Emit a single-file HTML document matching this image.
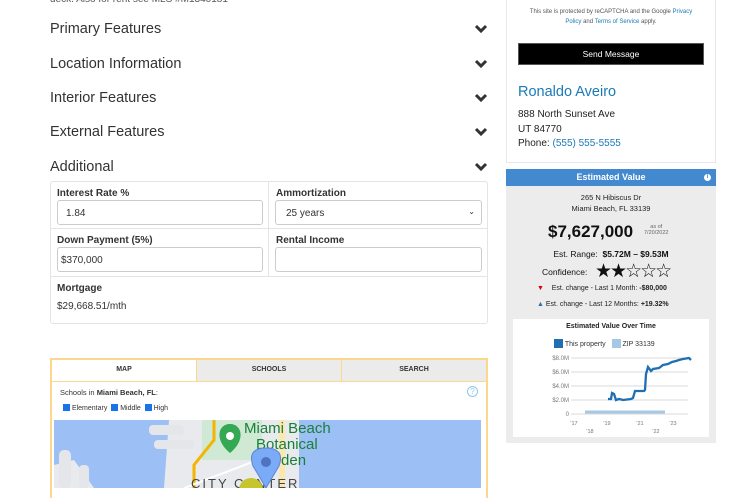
<!DOCTYPE html>
<html><head><meta charset="utf-8"><style>
*{box-sizing:border-box;margin:0;padding:0}
body{width:735px;height:488px;overflow:hidden;background:#fff;font-family:"Liberation Sans",sans-serif;color:#333;position:relative}
.a{position:absolute}
.h{position:absolute;left:50px;font-size:14.5px;color:#333}
.chev{position:absolute;left:474px;width:14px;height:10px}
.lab{position:absolute;font-size:10px;font-weight:bold;color:#333}
.inp{position:absolute;border:1px solid #ccc;border-radius:3px;height:25px;font-size:10px;padding:7px 0 0 8px;background:#fff}
</style></head><body>
<div class="a" style="left:50px;top:-6px;font-size:10px;color:#555">deck. Also for rent see MLS #M1340181</div>
<div class="h" style="top:21px">Primary Features</div>
<div class="h" style="top:56px">Location Information</div>
<div class="h" style="top:90px">Interior Features</div>
<div class="h" style="top:124px">External Features</div>
<div class="h" style="top:159px">Additional</div>
<svg class="chev" style="top:24px" viewBox="0 0 14 10"><path d="M2 2l5 5 5-5" stroke="#333" stroke-width="3" fill="none"/></svg>
<svg class="chev" style="top:59px" viewBox="0 0 14 10"><path d="M2 2l5 5 5-5" stroke="#333" stroke-width="3" fill="none"/></svg>
<svg class="chev" style="top:93px" viewBox="0 0 14 10"><path d="M2 2l5 5 5-5" stroke="#333" stroke-width="3" fill="none"/></svg>
<svg class="chev" style="top:127px" viewBox="0 0 14 10"><path d="M2 2l5 5 5-5" stroke="#333" stroke-width="3" fill="none"/></svg>
<svg class="chev" style="top:162px" viewBox="0 0 14 10"><path d="M2 2l5 5 5-5" stroke="#333" stroke-width="3" fill="none"/></svg>

<div class="a" style="left:50px;top:181px;width:438px;height:143px;border:1px solid #e4e4e4;border-radius:3px"></div>
<div class="a" style="left:268px;top:181px;width:1px;height:95px;background:#e4e4e4"></div>
<div class="a" style="left:50px;top:228px;width:438px;height:1px;background:#e4e4e4"></div>
<div class="a" style="left:50px;top:276px;width:438px;height:1px;background:#e4e4e4"></div>
<div class="lab" style="left:57px;top:188px">Interest Rate %</div>
<div class="lab" style="left:276px;top:188px">Ammortization</div>
<div class="inp" style="left:57px;top:200px;width:206px">1.84</div>
<div class="inp" style="left:275px;top:200px;width:207px;padding-left:10px">25 years<span style="position:absolute;right:6px;top:6px;font-size:8px">&#8964;</span></div>
<div class="lab" style="left:57px;top:235px">Down Payment (5%)</div>
<div class="lab" style="left:276px;top:235px">Rental Income</div>
<div class="inp" style="left:57px;top:247px;width:206px;padding-left:3px">$370,000</div>
<div class="inp" style="left:275px;top:247px;width:207px"></div>
<div class="lab" style="left:57px;top:283px">Mortgage</div>
<div class="a" style="left:57px;top:301px;font-size:10px">$29,668.51/mth</div>

<div class="a" style="left:50px;top:358px;width:438px;height:140px;border:2px solid #fcd88e;border-bottom:none"></div>
<div class="a" style="left:196px;top:360px;width:290px;height:21px;background:#ebebeb"></div>
<div class="a" style="left:52px;top:381px;width:434px;height:1px;background:#fcd88e"></div>
<div class="a" style="left:196px;top:360px;width:1px;height:21px;background:#fcd88e"></div>
<div class="a" style="left:341px;top:360px;width:1px;height:21px;background:#fcd88e"></div>
<div class="a" style="left:52px;top:366px;width:144px;text-align:center;font-size:7px;font-weight:bold">MAP</div>
<div class="a" style="left:197px;top:366px;width:144px;text-align:center;font-size:7px;font-weight:bold">SCHOOLS</div>
<div class="a" style="left:342px;top:366px;width:144px;text-align:center;font-size:7px;font-weight:bold">SEARCH</div>
<div class="a" style="left:60px;top:388px;font-size:7.5px">Schools in <b>Miami Beach, FL</b>:</div>
<div class="a" style="left:467px;top:386px;width:11px;height:11px;border:1px solid #8cc8ee;border-radius:50%;font-size:8px;color:#8cc8ee;text-align:center;line-height:9px">?</div>
<div class="a" style="left:63px;top:404px;font-size:7px;color:#333"><span style="display:inline-block;width:7px;height:7px;background:#1a73e8;vertical-align:-1px"></span> Elementary &nbsp;<span style="display:inline-block;width:7px;height:7px;background:#1a73e8;vertical-align:-1px"></span> Middle &nbsp;<span style="display:inline-block;width:7px;height:7px;background:#1a73e8;vertical-align:-1px"></span> High</div>
<svg class="a" style="left:54px;top:420px" width="427" height="68" viewBox="0 0 427 68">
<rect width="427" height="68" fill="#9cbff5"/>
<path d="M115 0H245V68H110Z" fill="#e8eaed"/>
<path d="M0 68V45L20 40L40 68Z" fill="#e8eaed"/>
<rect x="5" y="30" width="12" height="38" rx="5" fill="#e4e6ea"/>
<rect x="25" y="45" width="10" height="23" rx="4" fill="#e4e6ea"/>
<rect x="95" y="5" width="35" height="10" rx="4" fill="#e4e6ea"/>
<rect x="100" y="20" width="40" height="9" rx="4" fill="#e4e6ea"/>
<rect x="148" y="0" width="60" height="40" fill="#cfe9d4"/>
<path d="M160 0 L160 20 L140 45 L140 68" stroke="#f5b400" stroke-width="3" fill="none"/>
<path d="M130 68 L230 30" stroke="#fff" stroke-width="2"/>
<path d="M228 0V68" stroke="#fde7b0" stroke-width="6"/>
<path d="M176 33 C160 20 164 4 176 4 C188 4 192 20 176 33Z" fill="#34a853"/>
<circle cx="176" cy="16" r="4" fill="#fff"/>
<text x="190" y="13" font-size="15" fill="#188038" font-family="Liberation Sans">Miami Beach</text>
<text x="202" y="29" font-size="15" fill="#188038" font-family="Liberation Sans">Botanical</text>
<text x="202" y="45" font-size="15" fill="#188038" font-family="Liberation Sans">Garden</text>
<text x="137" y="68" font-size="13" fill="#444" letter-spacing="2" font-family="Liberation Sans">CITY CENTER</text>
<circle cx="197" cy="70" r="12" fill="#c6c52d"/>
<path d="M212 68 L199 46 C194 32 202 28 212 28 C222 28 230 32 225 46Z" fill="#7baaf7" stroke="#5a86d6"/>
<circle cx="212" cy="42" r="5" fill="#4e74c0"/>
</svg>

<div class="a" style="left:506px;top:-2px;width:210px;height:165px;border:1px solid #e8e8e8;border-top:none"></div>
<div class="a" style="left:506px;top:7px;width:210px;text-align:center;font-size:6px;line-height:10px;color:#555">This site is protected by reCAPTCHA and the Google <span style="color:#1a7ab8">Privacy<br>Policy</span> and <span style="color:#1a7ab8">Terms of Service</span> apply.</div>
<div class="a" style="left:518px;top:43px;width:186px;height:22px;background:#000;border:1px solid #555;color:#fff;font-size:8.5px;text-align:center;line-height:20px">Send Message</div>
<div class="a" style="left:518px;top:84px;font-size:14.5px;color:#1a7ab8">Ronaldo Aveiro</div>
<div class="a" style="left:518px;top:108px;font-size:10px;line-height:14.5px;color:#222">888 North Sunset Ave<br>UT 84770<br>Phone: <span style="color:#1a7ab8">(555) 555-5555</span></div>

<div class="a" style="left:506px;top:169px;width:210px;height:274px;background:#ececec"></div>
<div class="a" style="left:506px;top:169px;width:210px;height:17px;background:#4389cf;color:#fff;font-weight:bold;font-size:9px;text-align:center;line-height:17px">Estimated Value</div>
<div class="a" style="left:704px;top:174px;width:7px;height:7px;border-radius:50%;background:#fff;color:#4389cf;font-size:6px;text-align:center;line-height:7px;font-weight:bold">i</div>
<div class="a" style="left:506px;top:192px;width:210px;text-align:center;font-size:7.5px;line-height:11px;color:#222">265 N Hibiscus Dr<br>Miami Beach, FL 33139</div>
<div class="a" style="left:548px;top:222px;font-size:17px;font-weight:bold;color:#111">$7,627,000</div>
<div class="a" style="left:644px;top:224px;font-size:5.5px;color:#666;text-align:center;line-height:6px">as of<br>7/20/2022</div>
<div class="a" style="left:506px;top:249px;width:210px;text-align:center;font-size:8.5px;color:#111">Est. Range:&nbsp; <b>$5.72M – $9.53M</b></div>
<div class="a" style="left:542px;top:267px;font-size:8.5px;color:#111">Confidence:</div>
<div class="a" style="left:595px;top:260px;font-size:19px;color:#111;letter-spacing:-2px">★★☆☆☆</div>
<div class="a" style="left:537px;top:285px;font-size:7px;color:#222"><span style="color:#d00">▼</span> &nbsp;&nbsp; Est. change - Last 1 Month: <b>-$80,000</b></div>
<div class="a" style="left:537px;top:301px;font-size:7px;color:#222"><span style="color:#2a6fb0">▲</span> Est. change - Last 12 Months: <b>+19.32%</b></div>
<div class="a" style="left:513px;top:319px;width:196px;height:118px;background:#fff"></div>
<div class="a" style="left:513px;top:323px;width:196px;text-align:center;font-size:7px;font-weight:bold;color:#222">Estimated Value Over Time</div>
<div class="a" style="left:554px;top:339px;font-size:7px;color:#333"><span style="display:inline-block;width:9px;height:9px;background:#1f6fb2;vertical-align:-2px"></span> This property &nbsp;&nbsp;<span style="display:inline-block;width:9px;height:9px;background:#a7c8e4;vertical-align:-2px"></span> ZIP 33139</div>
<svg class="a" style="left:513px;top:350px" width="196" height="86" viewBox="0 0 196 86">
<g stroke="#ccc" stroke-width="0.7"><line x1="58" y1="8" x2="175" y2="8"/><line x1="58" y1="22" x2="175" y2="22"/><line x1="58" y1="36" x2="175" y2="36"/><line x1="58" y1="50" x2="175" y2="50"/><line x1="58" y1="64" x2="175" y2="64"/></g>
<g font-size="6" fill="#777" font-family="Liberation Sans" text-anchor="end"><text x="56" y="10">$8.0M</text><text x="56" y="24">$6.0M</text><text x="56" y="38">$4.0M</text><text x="56" y="52">$2.0M</text><text x="56" y="66">0</text></g>
<g font-size="5.5" fill="#777" font-family="Liberation Sans" text-anchor="middle"><text x="61" y="75">'17</text><text x="94" y="75">'19</text><text x="127" y="75">'21</text><text x="160" y="75">'23</text><text x="77" y="83">'18</text><text x="143" y="83">'22</text></g>
<path d="M72 62H152" stroke="#a7c8e4" stroke-width="3"/>
<path d="M95 49L98 49L99 43L101 44L103 50L106 49L110 50L118 49L120 48L122 41L131 41L132 40L133 24L135 17L138 21L140 19L146 18L150 15L155 14L159 12L163 11L166 10L170 9L176 8L178 10" stroke="#1f6fb2" stroke-width="2.3" fill="none"/>
</svg>
</body></html>
